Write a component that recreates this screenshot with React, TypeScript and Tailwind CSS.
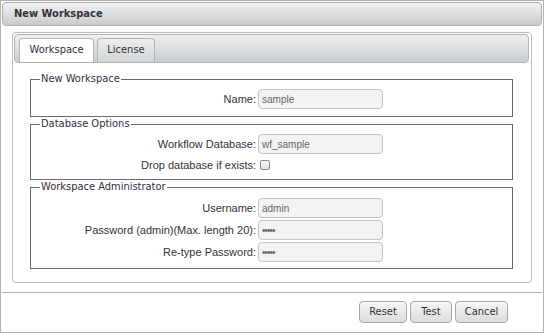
export default function App() {
  const label = "w-[225px] flex-none text-right text-[11px] text-[#333] font-['Liberation_Sans',Arial,sans-serif]"
  const input =
    "ml-[2px] flex h-[20px] w-[125px] items-center rounded-[4px] border border-[#c4c4c4] bg-[#f3f3f3] px-[3px] text-[10px] text-[#666] font-['Liberation_Sans',Arial,sans-serif]"
  const fieldset = 'border border-[#6a6a6a] px-0'
  const legend = "ml-[9px] px-[1px] text-[11px] leading-[12px] text-[#3a2a44] font-['DejaVu_Sans_Condensed','DejaVu_Sans',sans-serif]"
  const button =
    "h-[22px] rounded-[4px] border border-[#a9a9a9] bg-gradient-to-b from-[#f6f6f6] to-[#dcdcdc] text-[11px] text-[#333] font-['DejaVu_Sans_Condensed','DejaVu_Sans',sans-serif]"

  return (
    <div className="h-[333px] w-[544px] bg-white">
      <div className="flex h-[333px] w-[544px] flex-col border border-[#b4b4b4] bg-white p-px">
        {/* window title */}
        <div className="flex h-[24px] items-center rounded-[4px] border border-[#b0b0b0] bg-gradient-to-b from-[#f0f2f3] to-[#c6ccce] px-[11px]">
          <span className="text-[11px] font-bold text-[#333] font-['DejaVu_Sans_Condensed','DejaVu_Sans',sans-serif]">
            New Workspace
          </span>
        </div>

        {/* panel */}
        <div className="mx-[10px] mt-[6px] h-[251px] rounded-[4px] border border-[#bcbcbc] bg-white p-[1px] pr-[2px]">
          <div className="flex h-[29px] items-end gap-[3px] rounded-[4px] border border-[#b4b4b4] bg-gradient-to-b from-[#eef0f1] to-[#c7cdd0] pl-[4px]">
            <div className="flex h-[24px] w-[75px] items-center justify-center rounded-t-[4px] border border-b-0 border-[#b4b4b4] bg-white text-[11px] text-[#3a2a44] font-['DejaVu_Sans_Condensed','DejaVu_Sans',sans-serif]">
              Workspace
            </div>
            <div className="flex h-[24px] w-[58px] items-center justify-center rounded-t-[4px] border border-b-0 border-[#b4b4b4] bg-gradient-to-b from-[#eceeef] to-[#d2d6d8] text-[11px] text-[#333] font-['DejaVu_Sans_Condensed','DejaVu_Sans',sans-serif]">
              License
            </div>
          </div>

          <div className="ml-[16px] mr-[16px] mt-[10px] flex flex-col gap-[1px]">
            <fieldset className={fieldset}>
              <legend className={legend}>New Workspace</legend>
              <div className="flex items-center pb-[7px] pt-[4px]">
                <span className={label}>Name:</span>
                <span className={input}>sample</span>
              </div>
            </fieldset>

            <fieldset className={fieldset}>
              <legend className={legend}>Database Options</legend>
              <div className="flex flex-col gap-[2px] pb-[5px] pt-[4px]">
                <div className="flex items-center">
                  <span className={label}>Workflow Database:</span>
                  <span className={input}>wf_sample</span>
                </div>
                <div className="flex h-[18px] items-center">
                  <span className={label}>Drop database if exists:</span>
                  <span className="ml-[4px] h-[10px] w-[10px] rounded-[2px] border border-[#8a8a8a] bg-gradient-to-b from-[#f8f8f8] to-[#dedede]" />
                </div>
              </div>
            </fieldset>

            <fieldset className={fieldset}>
              <legend className={legend}>Workspace Administrator</legend>
              <div className="flex flex-col gap-[2px] pb-[6px] pt-[5px]">
                <div className="flex items-center">
                  <span className={label}>Username:</span>
                  <span className={input}>admin</span>
                </div>
                <div className="flex items-center">
                  <span className={label}>Password (admin)(Max. length 20):</span>
                  <span className={input + ' tracking-[-1px] text-[8px]'}>•••••</span>
                </div>
                <div className="flex items-center">
                  <span className={label}>Re-type Password:</span>
                  <span className={input + ' tracking-[-1px] text-[8px]'}>•••••</span>
                </div>
              </div>
            </fieldset>
          </div>
        </div>

        {/* footer */}
        <div className="mt-[9px] border-t border-[#b0b0b0]" />
        <div className="flex justify-end gap-[3px] pr-[34px] pt-[8px]">
          <button className={button + ' w-[48px]'}>Reset</button>
          <button className={button + ' w-[42px]'}>Test</button>
          <button className={button + ' w-[53px]'}>Cancel</button>
        </div>
      </div>
    </div>
  )
}
